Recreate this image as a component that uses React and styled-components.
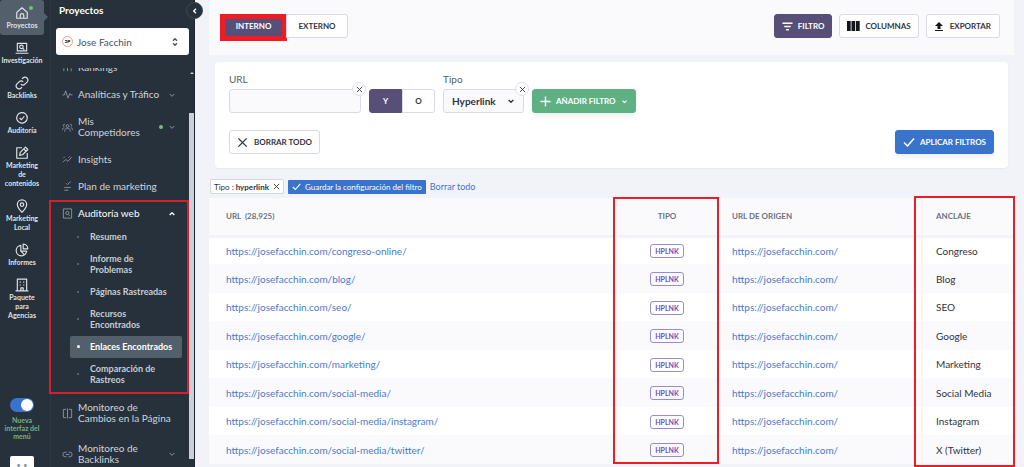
import React, { useState } from 'react';
import styled, { createGlobalStyle } from 'styled-components';

const GlobalStyle = createGlobalStyle`
  * {
    box-sizing: border-box;
  }

  body {
    margin: 0;
    overflow: hidden;
    background-color: #f2f3f8;
    font-family: Lato, 'Liberation Sans', sans-serif;
    color: #30343e;
  }

  button, input, select {
    font-family: inherit;
    color: inherit;
  }
`;

const Page = styled.div`
  display: flex;
  height: 100vh;
  overflow: hidden;
`;

/* Icon rail */

const Rail = styled.nav`
  display: flex;
  flex-direction: column;
  flex: 0 0 51px;
  min-width: 0;
  padding-right: 6px;
  background-color: #27313b;
  border-right: 1px solid #2e3944;
`;

const RailLink = styled.a`
  position: relative;
  display: flex;
  flex-direction: column;
  align-items: center;
  gap: 1px;
  padding: 6px 0 5px;
  color: #dfe3e7;
  background-color: ${({ $active }) => ($active ? '#53606c' : 'transparent')};
  border-radius: 3px;
  font-size: 7px;
  font-weight: 700;
  line-height: 9px;
  text-align: center;
  text-decoration: none;

  &::after {
    content: '';
    display: ${({ $active }) => ($active ? 'block' : 'none')};
    position: absolute;
    top: 13px;
    left: 100%;
    border: 4px solid transparent;
    border-right-width: 0;
    border-left-color: #53606c;
  }
`;

const RailText = styled.span`
  max-width: ${({ $wide }) => ($wide ? 'none' : '36px')};
`;

const StatusDot = styled.i`
  position: absolute;
  top: 6px;
  right: 11px;
  width: 4px;
  height: 4px;
  border-radius: 50%;
  background-color: #74bd82;
`;

const RailSwitch = styled.label`
  display: flex;
  flex-direction: column;
  align-items: center;
  gap: 4px;
  margin-top: 73px;
  padding: 0 2px;
  color: #74b182;
  font-size: 7px;
  font-weight: 700;
  line-height: 8px;
  text-align: center;
`;

const SwitchInput = styled.input`
  appearance: none;
  display: flex;
  width: 24px;
  height: 14px;
  margin: 0;
  padding: 1px;
  border-radius: 7px;
  background-color: #3973cb;

  &::before {
    content: '';
    width: 12px;
    height: 12px;
    border-radius: 50%;
    background-color: white;
  }

  &:checked {
    justify-content: flex-end;
  }
`;

const RailBox = styled.button`
  flex: none;
  align-self: center;
  width: 24px;
  height: 24px;
  margin-top: 16px;
  padding: 0 0 6px;
  border: 0;
  border-radius: 2px;
  background-color: white;
  color: #8a96a2;
  font-size: 8px;
  line-height: 16px;
`;

/* Project sidebar */

const Sidebar = styled.aside`
  position: relative;
  flex: 0 0 144px;
  min-width: 0;
  background-color: #27313b;
  border-right: 1px solid #1c242c;
`;

const SidebarTitle = styled.h2`
  margin: 0;
  padding: 3px 8px 11px;
  color: white;
  font-size: 10px;
  font-weight: 700;
  line-height: 14px;
`;

const CollapseButton = styled.button`
  position: absolute;
  top: 2px;
  right: -9px;
  display: grid;
  place-items: center;
  width: 17px;
  height: 17px;
  padding: 0;
  border: 1px solid #3c4854;
  border-radius: 50%;
  background-color: #27313b;
  color: white;
`;

const ProjectPicker = styled.button`
  display: flex;
  align-items: center;
  gap: 4px;
  width: 133px;
  height: 27px;
  margin: 0 5px 13px;
  padding: 0 10px 0 6px;
  border: 0;
  border-radius: 3px;
  background-color: white;
  color: #46525f;
  font-size: 10px;
  text-align: left;

  span {
    flex: 1;
  }
`;

const SidebarBody = styled.div`
  display: flex;
`;

const Menu = styled.div`
  flex: 1;
  min-width: 0;
`;

const ClippedRow = styled.div`
  display: flex;
  align-items: flex-end;
  height: 13px;
  overflow: hidden;
`;

const MenuLink = styled.a`
  display: flex;
  align-items: center;
  gap: 5px;
  width: 100%;
  padding: 8px 13px 8px 11px;
  margin-top: ${({ $spaced }) => ($spaced ? '3px' : '0')};
  color: ${({ $open }) => ($open ? '#ffffff' : '#ced4db')};
  font-size: 10px;
  line-height: 11px;
  text-decoration: none;

  svg {
    flex: none;
    color: #8a96a2;
  }

  svg:last-child {
    color: ${({ $open }) => ($open ? '#ffffff' : '#8a96a2')};
  }
`;

const MenuText = styled.span`
  flex: 1;
  white-space: pre;
`;

const MenuDot = styled.i`
  width: 4px;
  height: 4px;
  border-radius: 50%;
  background-color: #74bd82;
`;

const MenuGroup = styled.div`
  position: relative;
`;

const SubMenu = styled.div`
  padding: 0 7px 0 19px;
  margin-top: -1px;
`;

const SubLink = styled.a`
  display: flex;
  align-items: center;
  gap: ${({ $active }) => ($active ? 10 : 11)}px;
  padding: 5px 7px 6px;
  border-radius: 2px;
  background-color: ${({ $active }) => ($active ? '#53606c' : 'transparent')};
  color: ${({ $active }) => ($active ? '#ffffff' : '#c6cdd4')};
  font-size: 9px;
  font-weight: 700;
  line-height: 11px;
  text-decoration: none;
  white-space: pre;

  &::before {
    content: '';
    flex: none;
    width: ${({ $active }) => ($active ? 3 : 2)}px;
    height: ${({ $active }) => ($active ? 3 : 2)}px;
    border-radius: 50%;
    background-color: ${({ $active }) => ($active ? '#ffffff' : '#64717d')};
  }
`;

const ScrollTrack = styled.div`
  display: flex;
  flex-direction: column;
  align-items: center;
  gap: 39px;
  width: 5px;
  padding-top: 4px;
`;

const ScrollThumb = styled.div`
  width: 5px;
  height: 346px;
  background-color: #cdd0d8;
`;

const ScrollArrow = styled.i`
  border: 2px solid transparent;
  border-top-width: 0;
  border-bottom-color: #cdd0d8;
`;

/* Red marker frames laid over the parts they point at */

const Marker = styled.div`
  position: absolute;
  border: ${({ $thick }) => ($thick ? 5 : 2)}px solid #ee1c25;
  pointer-events: none;
`;

const MenuMarker = styled(Marker)`
  top: 0;
  right: 0;
  bottom: -3px;
  left: -2px;
  border-color: #d3202c;
`;

const TabMarker = styled(Marker)`
  top: -1px;
  right: -2px;
  bottom: -4px;
  left: -2px;
`;

const TypeMarker = styled(Marker)`
  top: -1px;
  right: 295px;
  width: 106px;
  height: 267px;
`;

const AnchorMarker = styled(Marker)`
  top: -2px;
  right: -1px;
  width: 101px;
  height: 271px;
`;

/* Main area */

const Main = styled.main`
  flex: 1;
  min-width: 0;
  padding: 0 10px 0 14px;
`;

const Toolbar = styled.div`
  display: flex;
  justify-content: space-between;
  height: 55px;
  padding: 14px 14px 0 12px;
  background-color: #fafafd;
`;

const Group = styled.div`
  display: flex;
  gap: 7px;
`;

const Button = styled.button`
  display: flex;
  align-items: center;
  justify-content: center;
  gap: ${({ $gap }) => $gap || 5}px;
  height: 24px;
  padding: 0 ${({ $pad }) => $pad || 7}px;
  border: 1px solid ${({ $bg }) => $bg || '#d9dae6'};
  border-radius: 3px;
  background-color: ${({ $bg }) => $bg || '#ffffff'};
  box-shadow: ${({ $raised }) => ($raised ? '0 3px 4px rgba(40, 50, 90, 0.08)' : 'none')};
  color: ${({ $bg }) => ($bg ? '#ffffff' : '#30343e')};
  font-size: 8px;
  font-weight: 700;
  white-space: nowrap;
`;

const Segments = styled.div`
  display: flex;
`;

const Segment = styled.button`
  position: relative;
  width: ${({ $width }) => $width}px;
  height: 24px;
  padding: 0;
  border: 1px solid ${({ $on }) => ($on ? '#574f78' : '#d9dae6')};
  border-radius: ${({ $on }) => ($on ? '3px 0 0 3px' : '0 3px 3px 0')};
  background-color: ${({ $on }) => ($on ? '#574f78' : '#ffffff')};
  color: ${({ $on }) => ($on ? '#ffffff' : '#30343e')};
  font-size: 8px;
  font-weight: 700;
`;

const FilterPanel = styled.section`
  display: flex;
  flex-direction: column;
  gap: 17px;
  margin: 7px 6px 0;
  padding: 11px 14px 14px;
  border-radius: 4px;
  background-color: white;
  box-shadow: 0 1px 2px rgba(60, 60, 90, 0.06);
`;

const FilterRow = styled.div`
  display: flex;
  align-items: flex-end;
  gap: 8px;
`;

const FilterActions = styled.div`
  display: flex;
  justify-content: space-between;
`;

const Field = styled.div`
  position: relative;
  display: flex;
  flex-direction: column;
  gap: 4px;
  width: ${({ $width }) => $width}px;

  label {
    color: #596069;
    font-size: 10px;
    line-height: 12px;
  }

  input, select {
    width: 100%;
    height: 24px;
    padding: 0 8px;
    border: 1px solid #d9dae6;
    border-radius: 3px;
    background-color: #fafafd;
    font-size: 10px;
    font-weight: 700;
    appearance: none;
  }

  > svg {
    position: absolute;
    right: 9px;
    bottom: 8px;
    pointer-events: none;
  }
`;

const ClearButton = styled.button`
  position: absolute;
  top: 9px;
  right: -5px;
  display: grid;
  place-items: center;
  width: 14px;
  height: 14px;
  padding: 0;
  border: 1px solid #dddfe9;
  border-radius: 50%;
  background-color: white;
`;

const ChipRow = styled.div`
  display: flex;
  align-items: center;
  gap: 4px;
  margin: 11px 1px 4px;
  height: 15px;
`;

const Chip = styled.span`
  display: flex;
  align-items: center;
  gap: 2px;
  height: 15px;
  padding: 0 3px;
  border: 1px solid #d3d5e0;
  border-radius: 2px;
  background-color: white;
  font-size: 8px;
  white-space: nowrap;

  button {
    display: flex;
    margin-left: 2px;
    padding: 0;
    border: 0;
    background: none;
  }
`;

const SaveButton = styled.button`
  display: flex;
  align-items: center;
  gap: 4px;
  height: 14px;
  padding: 0 4px;
  border: 0;
  border-radius: 1px;
  background-color: #3973cb;
  color: white;
  font-size: 8px;
  white-space: nowrap;
`;

const TextLink = styled.a`
  color: #3f76cb;
  font-size: 9px;
  text-decoration: none;
`;

const TableWrap = styled.div`
  position: relative;
`;

const Table = styled.table`
  width: 100%;
  border-collapse: collapse;
  table-layout: fixed;
`;

const HeadCell = styled.th`
  width: ${({ $width }) => $width};
  height: 38px;
  padding: ${({ $center }) => ($center ? '0' : '0 13px')};
  border-bottom: 3px solid #f2f3f8;
  border-left: 2px solid #f4f5f9;
  background-color: #fafafd;
  color: #68737f;
  font-size: 8px;
  font-weight: 700;
  text-align: ${({ $center }) => ($center ? 'center' : 'left')};
  white-space: pre;

  &:first-child {
    padding-left: 17px;
    border-left: 0;
  }
`;

const Row = styled.tr`
  height: 28px;
  background-color: #ffffff;

  &:nth-child(even) {
    height: 29px;
    background-color: #fafafd;
  }
`;

const Cell = styled.td`
  padding: ${({ $center }) => ($center ? '0' : '0 13px')};
  border-left: 2px solid #f4f5f9;
  font-size: 10px;
  line-height: 14px;
  text-align: ${({ $center }) => ($center ? 'center' : 'left')};
  white-space: nowrap;

  &:first-child {
    padding-left: 17px;
    border-left: 0;
  }

  a {
    color: #4a7bcb;
    text-decoration: none;
  }
`;

const Badge = styled.span`
  display: inline-block;
  padding: 0 4px;
  border: 1px solid #9d89d0;
  border-radius: 3px;
  color: #6c4fb8;
  font-size: 7px;
  font-weight: 700;
  line-height: 12px;
  vertical-align: middle;
`;

/* All glyphs are strokes on a 24 unit grid */
const paths = {
  home: 'M3 11 12 3l9 8v10H3z M9 21v-5a3 3 0 0 1 6 0v5',
  research: 'M4 4h16v13H4z M1 21h22 M13.5 12.5 16 15 M14 10a3 3 0 1 1-6 0 3 3 0 0 1 6 0',
  link: 'M10 14a5 5 0 0 0 7 0l4-4a5 5 0 0 0-7-7l-2 2 M14 10a5 5 0 0 0-7 0l-4 4a5 5 0 0 0 7 7l2-2',
  check: 'M21 12a9 9 0 1 1-3-7 M21 12a9 9 0 0 0-3-7 M8 12l3 3 5-6',
  edit: 'M12 3H3v18h18v-9 M8 16l1-5 9-9 4 4-9 9z M15 5l4 4',
  pin: 'M12 23S4 15 4 9.5a8 8 0 0 1 16 0C20 15 12 23 12 23z M15 9.5a3 3 0 1 1-6 0 3 3 0 0 1 6 0',
  pie: 'M10 4a9 9 0 1 0 10 10H10z M14 2v8h8a8 8 0 0 0-8-8z M10 14l6 6',
  building: 'M4 22V2h16v20 M1 22h22 M9 6v2 M15 6v2 M9 11v2 M15 11v2 M10 22v-5h4v5',
  pulse: 'M1 13h4l3-9 5 16 4-10 2 3h4',
  people: 'M15 9a3 3 0 1 1-6 0 3 3 0 0 1 6 0 M6 21v-3c0-5 12-5 12 0v3 M6 5a2.5 2.5 0 1 0-1 5 M18 5a2.5 2.5 0 1 1 1 5 M1 17c0-3 1-4 4-4 M23 17c0-3-1-4-4-4',
  insights: 'M2 18l6-6 5 4 8-9 M3 9l3-3 M14 8l3-3 M21 7v.1 M8 12v.1 M13 16v.1',
  plan: 'M9 5l3 3 7-7 M5 14h14 M5 20h9',
  audit: 'M3 2h18v20H3z M15 11a3.5 3.5 0 1 1-7 0 3.5 3.5 0 0 1 7 0 M14 14l3 3',
  compare: 'M9 3H3v18h6 M12 1v22 M15 3h6v18h-6',
  chain: 'M10 17H7A5 5 0 0 1 7 7h3 M14 7h3a5 5 0 0 1 0 10h-3 M8 12h8',
  ranks: 'M4 20V14 M12 20V8 M20 20V14',
  down: 'M5 9l7 7 7-7',
  up: 'M5 15l7-7 7 7',
  left: 'M15 5l-7 7 7 7',
  sort: 'M6 8l6-6 6 6 M6 16l6 6 6-6',
  close: 'M3 3l18 18 M21 3 3 21',
  tick: 'M2 13l7 7L22 5',
  plus: 'M12 1v22 M1 12h22',
  filter: 'M1 5h22 M5 12h14 M9 19h6',
};

const Icon = ({ name, size = 14, stroke = 2 }) => (
  <svg
    width={size}
    height={size}
    viewBox="0 0 24 24"
    fill="none"
    stroke="currentColor"
    strokeWidth={stroke}
    strokeLinejoin="round"
    aria-hidden="true"
  >
    <path d={paths[name]} />
  </svg>
);

const ColumnsIcon = () => (
  <svg width="13" height="10" viewBox="0 0 13 10" fill="#14161c" aria-hidden="true">
    <path d="M0 0h3.7v10H0z M4.5 0h3.7v10H4.5z M9 0h3.7v10H9z" />
  </svg>
);

const ExportIcon = () => (
  <svg width="8" height="9" viewBox="0 0 8 9" fill="#14161c" aria-hidden="true">
    <path d="M4 0l4 4H5.5v3h-3V4H0z M0 8h8v1H0z" />
  </svg>
);

const railItems = [
  { icon: 'home', text: 'Proyectos', active: true },
  { icon: 'research', text: 'Investigación', wide: true },
  { icon: 'link', text: 'Backlinks' },
  { icon: 'check', text: 'Auditoría' },
  { icon: 'edit', text: 'Marketing de contenidos' },
  { icon: 'pin', text: 'Marketing Local' },
  { icon: 'pie', text: 'Informes' },
  { icon: 'building', text: 'Paquete para Agencias' },
];

const menuItems = [
  { icon: 'pulse', text: 'Analíticas y Tráfico', arrow: true },
  { icon: 'people', text: 'Mis\nCompetidores', arrow: true, dot: true },
  { icon: 'insights', text: 'Insights' },
  { icon: 'plan', text: 'Plan de marketing' },
];

const auditItems = [
  'Resumen',
  'Informe de\nProblemas',
  'Páginas Rastreadas',
  'Recursos\nEncontrados',
  'Enlaces Encontrados',
  'Comparación de\nRastreos',
];

const moreItems = [
  { icon: 'compare', text: 'Monitoreo de\nCambios en la Página' },
  { icon: 'chain', text: 'Monitoreo de\nBacklinks', arrow: true },
];

const links = [
  { path: 'congreso-online', anchor: 'Congreso' },
  { path: 'blog', anchor: 'Blog' },
  { path: 'seo', anchor: 'SEO' },
  { path: 'google', anchor: 'Google' },
  { path: 'marketing', anchor: 'Marketing' },
  { path: 'social-media', anchor: 'Social Media' },
  { path: 'social-media/instagram', anchor: 'Instagram' },
  { path: 'social-media/twitter', anchor: 'X (Twitter)' },
];

const MenuItem = ({ item, spaced }) => (
  <MenuLink href="#" $spaced={spaced}>
    <Icon name={item.icon} size={11} />
    <MenuText>{item.text}</MenuText>
    {item.dot && <MenuDot />}
    {item.arrow && <Icon name="down" size={8} stroke={3} />}
  </MenuLink>
);

const App = () => {
  const [newMenu, setNewMenu] = useState(true);
  const [url, setUrl] = useState('');

  return (
    <Page>
      <GlobalStyle />
      <Rail>
        {railItems.map((item) => (
          <RailLink href="#" key={item.text} $active={item.active}>
            <Icon name={item.icon} />
            {item.active && <StatusDot />}
            <RailText $wide={item.wide}>{item.text}</RailText>
          </RailLink>
        ))}
        <RailSwitch>
          <SwitchInput
            type="checkbox"
            checked={newMenu}
            onChange={(e) => setNewMenu(e.target.checked)}
          />
          <span>Nueva interfaz del menú</span>
        </RailSwitch>
        <RailBox aria-label="Más">• •</RailBox>
      </Rail>

      <Sidebar>
        <SidebarTitle>Proyectos</SidebarTitle>
        <CollapseButton aria-label="Contraer">
          <Icon name="left" size={8} stroke={4} />
        </CollapseButton>
        <ProjectPicker>
          <svg width="11" height="11" viewBox="0 0 11 11" aria-hidden="true">
            <circle cx="5.5" cy="5.5" r="5" fill="#ffffff" stroke="#e8a386" />
            <path d="M3 4.5h2v2H3 M6 7V4.5h2v1H6" fill="none" stroke="#46525f" />
          </svg>
          <span>Jose Facchin</span>
          <Icon name="sort" size={8} stroke={4} />
        </ProjectPicker>

        <SidebarBody>
          <Menu>
            <ClippedRow>
              <MenuItem item={{ icon: 'ranks', text: 'Rankings' }} />
            </ClippedRow>
            {menuItems.map((item) => (
              <MenuItem item={item} key={item.text} />
            ))}
            <MenuGroup>
              <MenuLink href="#" $open>
                <Icon name="audit" size={11} />
                <MenuText>Auditoría web</MenuText>
                <Icon name="up" size={8} stroke={4} />
              </MenuLink>
              <SubMenu>
                {auditItems.map((text) => (
                  <SubLink href="#" key={text} $active={text === 'Enlaces Encontrados'}>
                    {text}
                  </SubLink>
                ))}
              </SubMenu>
              <MenuMarker />
            </MenuGroup>
            {moreItems.map((item) => (
              <MenuItem item={item} key={item.text} spaced />
            ))}
          </Menu>
          <ScrollTrack>
            <ScrollArrow />
            <ScrollThumb />
          </ScrollTrack>
        </SidebarBody>
      </Sidebar>

      <Main>
        <Toolbar>
          <Segments>
            <Segment $on $width={65}>
              INTERNO
              <TabMarker $thick />
            </Segment>
            <Segment $width={62}>EXTERNO</Segment>
          </Segments>
          <Group>
            <Button $bg="#574f78">
              <Icon name="filter" size={11} stroke={3} /> FILTRO
            </Button>
            <Button>
              <ColumnsIcon /> COLUMNAS
            </Button>
            <Button $gap={7} $pad={8}>
              <ExportIcon /> EXPORTAR
            </Button>
          </Group>
        </Toolbar>

        <FilterPanel>
          <FilterRow>
            <Field $width={132}>
              <label htmlFor="url">URL</label>
              <input id="url" value={url} onChange={(e) => setUrl(e.target.value)} />
              <ClearButton aria-label="Quitar URL" onClick={() => setUrl('')}>
                <Icon name="close" size={7} stroke={3} />
              </ClearButton>
            </Field>
            <Segments>
              <Segment $on $width={33}>Y</Segment>
              <Segment $width={33}>O</Segment>
            </Segments>
            <Field $width={81}>
              <label htmlFor="tipo">Tipo</label>
              <select id="tipo" defaultValue="hyperlink">
                <option value="hyperlink">Hyperlink</option>
              </select>
              <Icon name="down" size={8} stroke={4} />
              <ClearButton aria-label="Quitar tipo">
                <Icon name="close" size={7} stroke={3} />
              </ClearButton>
            </Field>
            <Button $bg="#5fb083" $raised>
              <Icon name="plus" size={11} stroke={3} /> AÑADIR FILTRO
              <Icon name="down" size={7} stroke={4} />
            </Button>
          </FilterRow>
          <FilterActions>
            <Button $gap={6}>
              <Icon name="close" size={11} stroke={3} /> BORRAR TODO
            </Button>
            <Button $bg="#3973cb" $raised>
              <Icon name="tick" size={12} stroke={3} /> APLICAR FILTROS
            </Button>
          </FilterActions>
        </FilterPanel>

        <ChipRow>
          <Chip>
            <span>Tipo :</span>
            <b>hyperlink</b>
            <button aria-label="Quitar filtro">
              <Icon name="close" size={7} stroke={3} />
            </button>
          </Chip>
          <SaveButton>
            <Icon name="tick" size={9} stroke={3} /> Guardar la configuración del filtro
          </SaveButton>
          <TextLink href="#">Borrar todo</TextLink>
        </ChipRow>

        <TableWrap>
          <Table>
            <thead>
              <tr>
                <HeadCell $width="auto">URL  (28,925)</HeadCell>
                <HeadCell $width="102px" $center>TIPO</HeadCell>
                <HeadCell $width="204px">URL DE ORIGEN</HeadCell>
                <HeadCell $width="92px">ANCLAJE</HeadCell>
              </tr>
            </thead>
            <tbody>
              {links.map((link) => (
                <Row key={link.path}>
                  <Cell>
                    <a href="#">https://josefacchin.com/{link.path}/</a>
                  </Cell>
                  <Cell $center>
                    <Badge>HPLNK</Badge>
                  </Cell>
                  <Cell>
                    <a href="#">https://josefacchin.com/</a>
                  </Cell>
                  <Cell>{link.anchor}</Cell>
                </Row>
              ))}
            </tbody>
          </Table>
          <TypeMarker />
          <AnchorMarker />
        </TableWrap>
      </Main>
    </Page>
  );
};

export default App;
